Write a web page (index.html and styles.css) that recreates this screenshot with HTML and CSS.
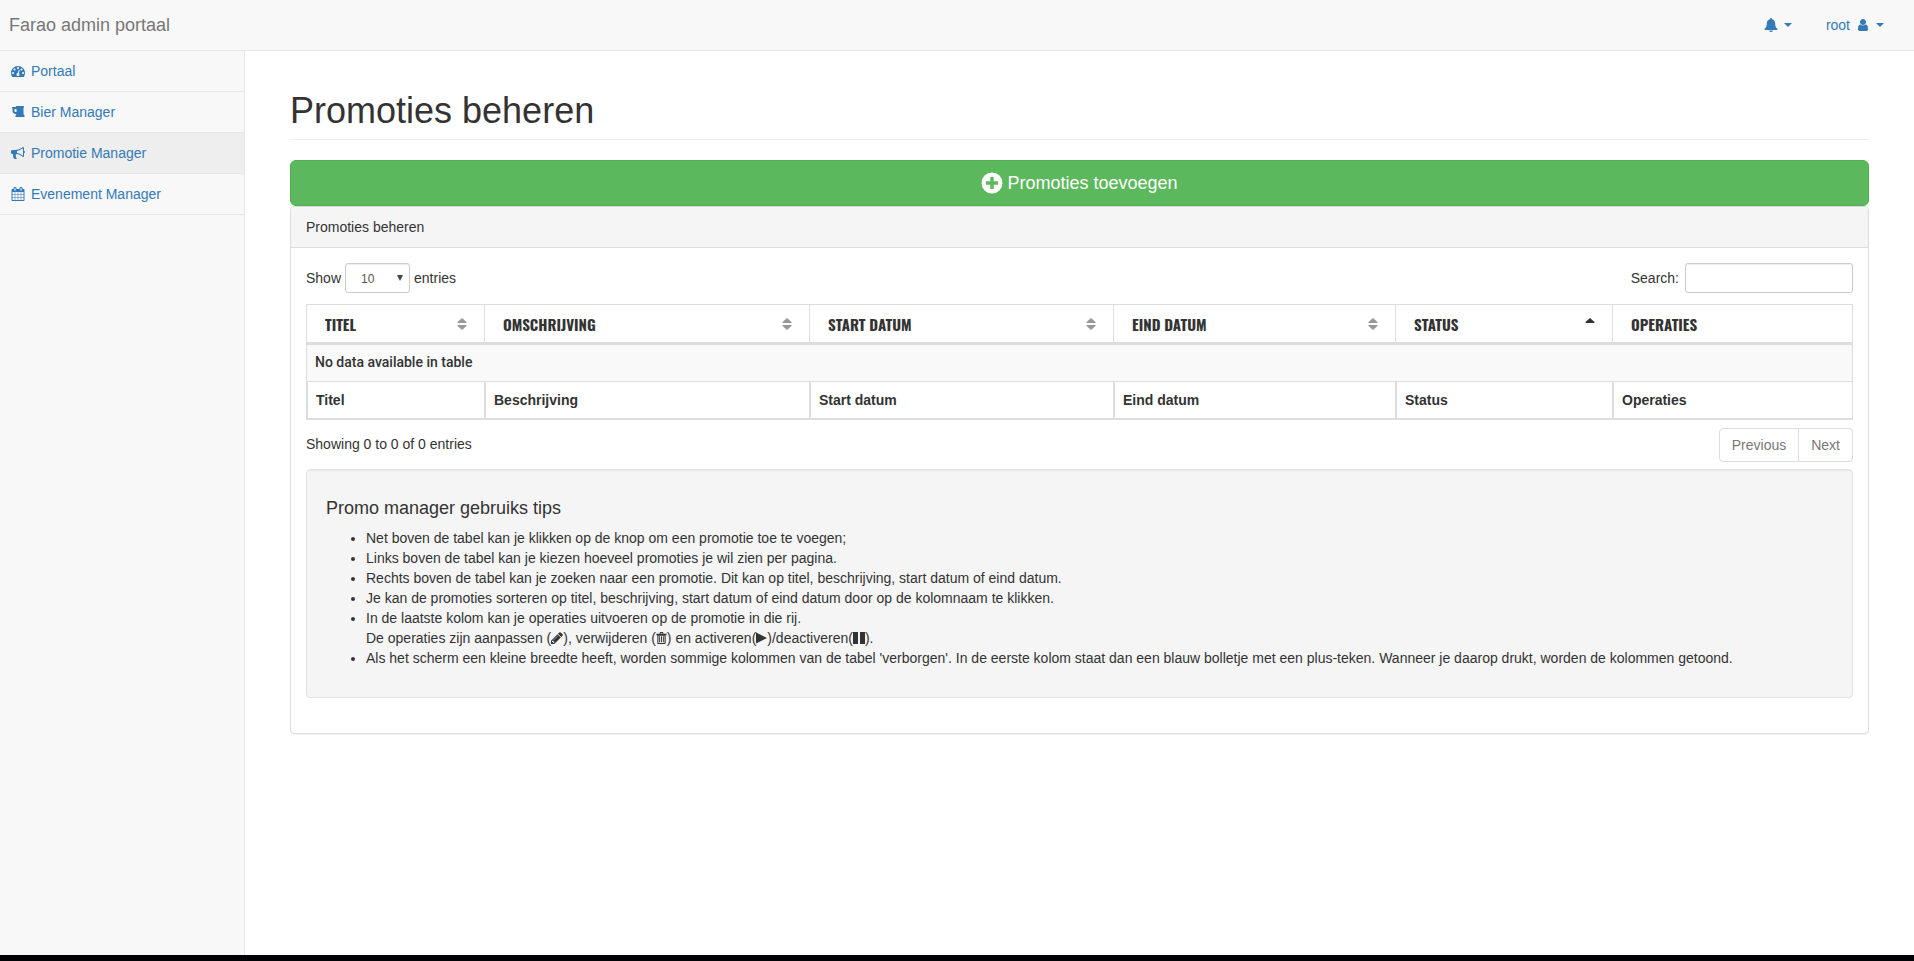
FILE: index.html
```html
<!DOCTYPE html>
<html lang="nl">
<head>
<meta charset="utf-8">
<title>Farao admin portaal</title>
<link rel="stylesheet" href="styles.css">
</head>
<body>
<svg class="sprite" aria-hidden="true">
  <symbol id="i-dashboard" viewBox="0 0 1792 1792"><path d="M384 1152q0-53-37.500-90.500t-90.500-37.500-90.500 37.500-37.500 90.500 37.500 90.500 90.500 37.500 90.500-37.500 37.500-90.500zm192-448q0-53-37.500-90.500t-90.500-37.500-90.500 37.500-37.500 90.500 37.500 90.500 90.500 37.500 90.500-37.500 37.500-90.500zm428 481l101-382q6-26-7.500-48.500t-38.500-29.500-48 6.500-30 39.500l-101 382q-60 5-107 43.500t-63 98.500q-20 77 20 146t117 89 146-20 89-117q16-60-6-117t-72-91zm660-33q0-53-37.500-90.500t-90.500-37.500-90.500 37.500-37.500 90.500 37.500 90.500 90.500 37.500 90.500-37.500 37.500-90.500zm-640-640q0-53-37.500-90.500t-90.500-37.500-90.500 37.500-37.500 90.500 37.500 90.500 90.500 37.500 90.500-37.500 37.500-90.500zm448 192q0-53-37.500-90.500t-90.500-37.500-90.500 37.500-37.500 90.500 37.500 90.500 90.500 37.500 90.500-37.500 37.500-90.500zm320 448q0 261-141 483-19 29-54 29h-1402q-35 0-54-29-141-221-141-483 0-182 71-348t191-286 286-191 348-71 348 71 286 191 191 286 71 348z"/></symbol>
  <symbol id="i-beer" viewBox="0 0 1792 1792"><path d="M704 896v-384h-256v256q0 53 37.500 90.500t90.500 37.500h128zm1024 448v192h-1152v-192l128-192h-128q-159 0-271.500-112.500t-112.500-271.500v-320l-64-64 32-128h480l32-128h960l32 192-64 32v800z"/></symbol>
  <symbol id="i-bullhorn" viewBox="0 0 1792 1792"><path d="M1664 640q53 0 90.500 37.500t37.500 90.500-37.500 90.500-90.500 37.500v384q0 52-38 90t-90 38q-417-347-812-380-58 19-91 66t-31 100.500 40 92.500q-20 33-23 65.500t6 58 33.500 55 48 50 61.500 50.500q-29 58-111.500 83t-168.500 11.500-132-55.500q-7-23-29.500-87.500t-32-94.500-23-89-15-101 3.500-98.500 22-110.500h-122q-66 0-113-47t-47-113v-192q0-66 47-113t113-47h480q435 0 896-384 52 0 90 38t38 90v384zm-128 604v-954q-394 302-768 343v270q377 42 768 341z"/></symbol>
  <symbol id="i-calendar" viewBox="0 0 1792 1792"><path d="M192 1664h288v-288h-288v288zm352 0h320v-288h-320v288zm-352-352h288v-320h-288v320zm352 0h320v-320h-320v320zm-352-384h288v-288h-288v288zm736 736h320v-288h-320v288zm-384-736h320v-288h-320v288zm768 736h288v-288h-288v288zm-384-352h320v-320h-320v320zm-352-864v-288q0-13-9.500-22.500t-22.500-9.500h-64q-13 0-22.500 9.500t-9.500 22.500v288q0 13 9.500 22.500t22.500 9.500h64q13 0 22.500-9.500t9.500-22.500zm736 864h288v-320h-288v320zm-384-384h320v-288h-320v288zm384 0h288v-288h-288v288zm32-480v-288q0-13-9.500-22.500t-22.500-9.500h-64q-13 0-22.500 9.500t-9.500 22.500v288q0 13 9.500 22.500t22.500 9.500h64q13 0 22.500-9.500t9.500-22.500zm384-64v1280q0 52-38 90t-90 38h-1408q-52 0-90-38t-38-90v-1280q0-52 38-90t90-38h128v-96q0-66 47-113t113-47h64q66 0 113 47t47 113v96h384v-96q0-66 47-113t113-47h64q66 0 113 47t47 113v96h128q52 0 90 38t38 90z"/></symbol>
  <symbol id="i-user" viewBox="0 0 1792 1792"><path d="M1536 1399q0 109-62.500 187t-150.500 78h-854q-88 0-150.500-78t-62.500-187q0-85 8.500-160.500t31.500-152 58.500-131 94-89 134.500-34.500q131 128 313 128t313-128q76 0 134.500 34.500t94 89 58.500 131 31.500 152 8.500 160.500zm-256-887q0 159-112.500 271.500t-271.500 112.500-271.500-112.500-112.500-271.500 112.500-271.500 271.500-112.500 271.500 112.500 112.500 271.500z"/></symbol>
  <symbol id="i-bell" viewBox="0 0 14 14"><path d="M7 0a1 1 0 0 1 1 1v.3c2 .4 3.200 2 3.200 4.200 0 3 .8 4.300 2.300 5.300.2.600-.2 1.200-.8 1.200H1.300c-.6 0-1-.6-.8-1.200C2 9.800 2.800 8.500 2.800 5.500c0-2.200 1.200-3.800 3.200-4.200V1a1 1 0 0 1 1-1zM5.200 12.400h3.600a1.800 1.600 0 0 1-3.600 0z"/></symbol>
  <symbol id="i-plus" viewBox="0 0 22 22"><path fill-rule="evenodd" d="M11 .5a10.500 10.500 0 1 0 0 21 10.500 10.500 0 0 0 0-21zM9.300 5h3.400v4.300H17v3.400h-4.300V17H9.300v-4.300H5V9.300h4.300z"/></symbol>
  <symbol id="i-pencil" viewBox="128 128 1536 1536"><path d="M491 1536l91-91-235-235-91 91v107h128v128h107zm523-928q0-22-22-22-10 0-17 7l-542 542q-7 7-7 17 0 22 22 22 10 0 17-7l542-542q7-7 7-17zm-54-192l416 416-832 832h-416v-416zm683 96q0 53-37 90l-166 166-416-416 166-165q36-38 90-38 53 0 91 38l235 234q37 39 37 91z"/></symbol>
  <symbol id="i-trash" viewBox="0 0 11 13"><path fill-rule="evenodd" d="M3.500 2V1A1 1 0 0 1 4.500 0h2a1 1 0 0 1 1 1v1H11v1.500h-1V12a1 1 0 0 1-1 1H2a1 1 0 0 1-1-1V3.500H0V2zM4.500 1v1h2V1zM2.200 4v7.800h6.600V4zM3 4.500h1V11H3zm2 0h1V11H5zm2 0h1V11H7z"/></symbol>
  <symbol id="i-play" viewBox="0 0 11 12"><path d="M0 0.500v11L11 6z"/></symbol>
  <symbol id="i-pause" viewBox="0 0 12 12"><path d="M0 0h5v12H0zM7 0h5v12H7z"/></symbol>
  <symbol id="i-sort" viewBox="0 0 10 14"><path d="M5 1l4.500 4v1H.5V5zM.5 8h9v1L5 13 .5 9z"/></symbol>
  <symbol id="i-asc" viewBox="0 0 10 14"><path d="M5 1l4.500 4v1H.5V5z"/></symbol>
</svg>

<header class="navbar">
  <a class="brand" href="#">Farao admin portaal</a>
  <nav class="navbar-menu">
    <a href="#" aria-label="Meldingen"><svg class="icon"><use href="#i-bell"/></svg><span class="caret"></span></a>
    <a href="#">root <svg class="icon"><use href="#i-user"/></svg><span class="caret"></span></a>
  </nav>
</header>

<div class="wrapper">
  <nav class="sidebar">
    <a href="#"><svg class="icon"><use href="#i-dashboard"/></svg>Portaal</a>
    <a href="#"><svg class="icon"><use href="#i-beer"/></svg>Bier Manager</a>
    <a class="active" href="#"><svg class="icon"><use href="#i-bullhorn"/></svg>Promotie Manager</a>
    <a href="#"><svg class="icon"><use href="#i-calendar"/></svg>Evenement Manager</a>
  </nav>

  <main class="content">
    <h1>Promoties beheren</h1>
    <button class="btn-add" type="button"><svg class="icon-lg"><use href="#i-plus"/></svg>Promoties toevoegen</button>

    <section class="panel">
      <div class="panel-heading">Promoties beheren</div>
      <div class="panel-body">
        <div class="toolbar">
          <label class="field">Show
            <select class="length"><option>10</option><option>25</option><option>50</option><option>100</option></select>
            entries</label>
          <label class="field search">Search: <input type="search"></label>
        </div>

        <table class="grid">
          <colgroup><col class="c1"><col class="c2"><col class="c3"><col class="c4"><col class="c5"><col></colgroup>
          <thead>
            <tr>
              <th><div class="head">Titel<svg class="sort"><use href="#i-sort"/></svg></div></th>
              <th><div class="head">Omschrijving<svg class="sort"><use href="#i-sort"/></svg></div></th>
              <th><div class="head">Start datum<svg class="sort"><use href="#i-sort"/></svg></div></th>
              <th><div class="head">Eind datum<svg class="sort"><use href="#i-sort"/></svg></div></th>
              <th><div class="head">Status<svg class="sort on"><use href="#i-asc"/></svg></div></th>
              <th><div class="head">Operaties</div></th>
            </tr>
          </thead>
          <tbody>
            <tr><td colspan="6">No data available in table</td></tr>
          </tbody>
          <tfoot>
            <tr><th>Titel</th><th>Beschrijving</th><th>Start datum</th><th>Eind datum</th><th>Status</th><th>Operaties</th></tr>
          </tfoot>
        </table>

        <div class="table-footer">
          <span>Showing 0 to 0 of 0 entries</span>
          <div class="pager"><a href="#">Previous</a><a href="#">Next</a></div>
        </div>

        <div class="well">
          <h4>Promo manager gebruiks tips</h4>
          <ul>
            <li>Net boven de tabel kan je klikken op de knop om een promotie toe te voegen;</li>
            <li>Links boven de tabel kan je kiezen hoeveel promoties je wil zien per pagina.</li>
            <li>Rechts boven de tabel kan je zoeken naar een promotie. Dit kan op titel, beschrijving, start datum of eind datum.</li>
            <li>Je kan de promoties sorteren op titel, beschrijving, start datum of eind datum door op de kolomnaam te klikken.</li>
            <li>In de laatste kolom kan je operaties uitvoeren op de promotie in die rij.<br>
              De operaties zijn aanpassen (<svg class="glyph"><use href="#i-pencil"/></svg>), verwijderen (<svg class="glyph narrow"><use href="#i-trash"/></svg>) en activeren(<svg class="glyph narrow"><use href="#i-play"/></svg>)/deactiveren(<svg class="glyph"><use href="#i-pause"/></svg>).</li>
            <li>Als het scherm een kleine breedte heeft, worden sommige kolommen van de tabel 'verborgen'. In de eerste kolom staat dan een blauw bolletje met een plus-teken. Wanneer je daarop drukt, worden de kolommen getoond.</li>
          </ul>
        </div>
      </div>
    </section>
  </main>
</div>
<footer class="bottom-bar"></footer>
</body>
</html>
```
FILE: styles.css
```css
* { box-sizing: border-box; }

body {
  margin: 0;
  min-height: 100vh;
  display: flex;
  flex-direction: column;
  background: #fff;
  color: #333;
  font: 14px/20px "Liberation Sans", Arial, sans-serif;
}

a { color: #337ab7; text-decoration: none; }
svg { fill: currentColor; flex: none; }
.sprite { position: absolute; width: 0; height: 0; }
.icon { width: 14px; height: 14px; }

.navbar {
  display: flex;
  justify-content: space-between;
  align-items: center;
  height: 51px;
  padding: 0 30px 0 9px;
  background: #f8f8f8;
  border-bottom: 1px solid #e7e7e7;
}
.brand { color: #777; font-size: 18px; }
.navbar-menu { display: flex; gap: 34px; }
.navbar-menu a { display: flex; align-items: center; gap: 6px; }
.caret {
  border-top: 4px solid;
  border-left: 4px solid transparent;
  border-right: 4px solid transparent;
}

.wrapper { display: flex; flex: 1; }
.sidebar {
  width: 245px;
  flex: none;
  background: #f8f8f8;
  border-right: 1px solid #e7e7e7;
}
.sidebar a {
  display: flex;
  align-items: center;
  gap: 6px;
  padding: 10px 11px;
  border-bottom: 1px solid #e7e7e7;
}
.sidebar .active { background: #eee; }

.content { flex: 1; min-width: 0; padding: 40px 45px 20px; }
h1 {
  margin: 0 0 20px;
  padding-bottom: 9px;
  border-bottom: 1px solid #eee;
  font-size: 36px;
  font-weight: 500;
  line-height: 39px;
}

.btn-add {
  display: flex;
  justify-content: center;
  align-items: center;
  gap: 4px;
  width: 100%;
  height: 46px;
  background: #5cb85c;
  border: 1px solid #4cae4c;
  border-radius: 6px;
  color: #fff;
  font: inherit;
  font-size: 18px;
}
.icon-lg { width: 22px; height: 22px; }

.panel {
  border: 1px solid #ddd;
  border-radius: 4px;
  box-shadow: 0 1px 1px rgba(0, 0, 0, .05);
}
.panel-heading {
  padding: 10px 15px;
  background: #f5f5f5;
  border-bottom: 1px solid #ddd;
  border-radius: 3px 3px 0 0;
}
.panel-body { padding: 15px 15px 35px; }

.toolbar { display: flex; justify-content: space-between; margin-bottom: 11px; }
.field { display: flex; align-items: center; gap: 4px; }
.field.search { gap: 6px; }
.length, .search input {
  height: 30px;
  border: 1px solid #ccc;
  border-radius: 3px;
  background: #fff;
  box-shadow: inset 0 1px 1px rgba(0, 0, 0, .075);
  color: #555;
  font: inherit;
  font-size: 12px;
}
.length {
  width: 65px;
  padding: 5px 15px;
  appearance: none;
  background: #fff url("data:image/svg+xml,%3Csvg xmlns='http://www.w3.org/2000/svg' width='6' height='6'%3E%3Cpath d='M0 0h6L3 6z' fill='%23444'/%3E%3C/svg%3E") no-repeat right 6px center;
}
.search input { width: 168px; padding: 5px 10px; }

.grid {
  width: 100%;
  table-layout: fixed;
  border-collapse: separate;
  border-spacing: 0;
  border: 1px solid #ddd;
}
.c1 { width: 178px; }
.c2 { width: 325px; }
.c3 { width: 304px; }
.c4 { width: 282px; }
.c5 { width: 217px; }
.grid th, .grid td { text-align: left; border: 0 solid #ddd; }
.grid thead th { padding: 9px 17px 8px 18px; border-width: 0 1px 2px 0; }
.grid thead th:last-child, .grid tfoot th:last-child { border-right-width: 0; }
.head {
  display: flex;
  justify-content: space-between;
  align-items: center;
  font: bold 15px/20px Oswald, Roboto, sans-serif;
  text-transform: uppercase;
}
.sort { width: 10px; height: 14px; color: #999; }
.sort.on { color: #333; }
.grid td {
  padding: 7px 8px 9px;
  border-top-width: 1px;
  background: #f9f9f9;
  font-family: Roboto, sans-serif;
  font-weight: 500;
}
.grid tfoot th { padding: 8px; border-width: 1px; font-weight: bold; }
.grid tfoot th:last-child { border-right-width: 0; }

.table-footer {
  display: flex;
  justify-content: space-between;
  align-items: flex-start;
  padding: 8px 0 7px;
}
.table-footer span { padding-top: 6px; }
.pager { display: flex; border: 1px solid #ddd; border-radius: 4px; }
.pager a { padding: 6px 12px; color: #777; }
.pager a + a { border-left: 1px solid #ddd; }

.well {
  padding: 29px 19px;
  background: #f5f5f5;
  border: 1px solid #e3e3e3;
  border-radius: 4px;
  box-shadow: inset 0 1px 1px rgba(0, 0, 0, .05);
}
.well h4 { margin: 0 0 10px; font-size: 18px; font-weight: 500; line-height: 19px; }
.well ul { margin: 0; padding-left: 40px; }
.glyph { width: 12px; height: 12px; vertical-align: -1px; }
.glyph.narrow { width: 11px; }

.bottom-bar { height: 6px; background: #000205; }
```
